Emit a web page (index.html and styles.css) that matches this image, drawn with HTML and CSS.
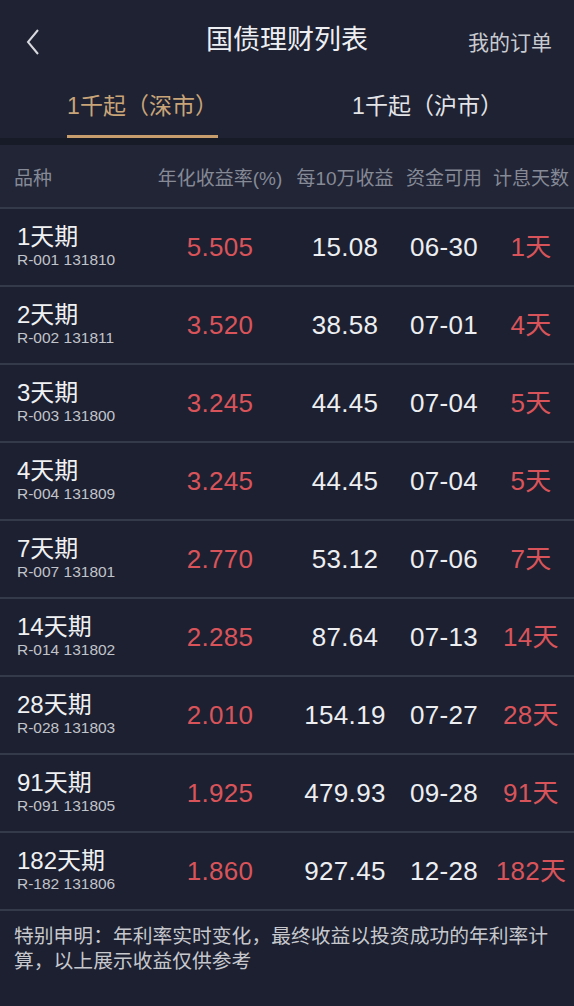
FILE: index.html
```html
<!DOCTYPE html>
<html lang="zh-CN">
<head>
    <meta charset="UTF-8">
    <title>国债理财列表</title>
    <link rel="stylesheet" href="styles.css">
</head>
<body>
    <div class="nav">
        <span class="back">
            <svg width="14" height="28" viewBox="0 0 14 28"><polyline points="12,2 2,14 12,26" fill="none" stroke="#d8d9de" stroke-width="2"/></svg>
        </span>
        <h1>国债理财列表</h1>
        <span class="orders">我的订单</span>
    </div>

    <div class="tabs">
        <div class="tab active"><span>1千起（深市）</span></div>
        <div class="tab"><span>1千起（沪市）</span></div>
    </div>
    <div class="strip"></div>

    <div class="row head">
        <div class="name">品种</div>
        <div>年化收益率(%)</div>
        <div>每10万收益</div>
        <div>资金可用</div>
        <div>计息天数</div>
    </div>

    <div id="list"></div>

    <p class="note">特别申明：年利率实时变化，最终收益以投资成功的年利率计算，以上展示收益仅供参考</p>

    <script>
        // rows of the product table
        const items = [
            ['1天期', 'R-001 131810', '5.505', '15.08', '06-30', '1天'],
            ['2天期', 'R-002 131811', '3.520', '38.58', '07-01', '4天'],
            ['3天期', 'R-003 131800', '3.245', '44.45', '07-04', '5天'],
            ['4天期', 'R-004 131809', '3.245', '44.45', '07-04', '5天'],
            ['7天期', 'R-007 131801', '2.770', '53.12', '07-06', '7天'],
            ['14天期', 'R-014 131802', '2.285', '87.64', '07-13', '14天'],
            ['28天期', 'R-028 131803', '2.010', '154.19', '07-27', '28天'],
            ['91天期', 'R-091 131805', '1.925', '479.93', '09-28', '91天'],
            ['182天期', 'R-182 131806', '1.860', '927.45', '12-28', '182天']
        ];
        document.getElementById('list').innerHTML = items.map(it => `
            <div class="row item">
                <div class="name"><div class="title">${it[0]}</div><div class="code">${it[1]}</div></div>
                <div class="num red">${it[2]}</div>
                <div class="num">${it[3]}</div>
                <div class="num">${it[4]}</div>
                <div class="num red">${it[5]}</div>
            </div>`).join('');
    </script>
</body>
</html>
```

FILE: styles.css
```css
body {
    font-family: "Liberation Sans", "Noto Sans CJK SC", sans-serif;
    background-color: #1c2030;
    color: #e6e7ea;
    margin: 0;
    padding: 0;
}

.nav {
    height: 80px;
    display: flex;
    align-items: center;
    justify-content: space-between;
    padding: 0 22px 0 26px;
    background-color: #1e2232;
    position: relative;
}

.back {
    display: flex;
    margin-top: 4px;
}

h1 {
    position: absolute;
    left: 0;
    right: 0;
    top: 24px;
    margin: 0;
    text-align: center;
    font-size: 27px;
    font-weight: normal;
    line-height: 32px;
    color: #eeeff2;
    pointer-events: none;
}

.orders {
    font-size: 21px;
    color: #c9cbd1;
    margin-top: 2px;
}

.tabs {
    display: flex;
    height: 58px;
    background-color: #1e2232;
    padding-right: 4px;
}

.tab {
    flex: 1;
    display: flex;
    justify-content: center;
}

.tab span {
    font-size: 23px;
    line-height: 48px;
    padding-top: 2px;
    color: #e3e4e8;
    box-sizing: border-box;
    height: 58px;
}

.tab.active span {
    color: #c9a479;
    border-bottom: 3px solid #c89d6e;
}

.strip {
    height: 7px;
    background-color: #171b27;
}

.row {
    display: grid;
    grid-template-columns: 150px 140px 110px 88px 86px;
    align-items: center;
    text-align: center;
    border-bottom: 2px solid #343a4a;
}

.row .name {
    text-align: left;
}

.head {
    height: 62px;
    background-color: #212536;
    font-size: 19px;
    color: #868a96;
    white-space: nowrap;
}

.head .name {
    padding-left: 14px;
}

.item {
    height: 76px;
}

.item .name {
    padding-left: 17px;
    padding-bottom: 2px;
}

.title {
    font-size: 24px;
    line-height: 28px;
    color: #f0f1f3;
}

.code {
    font-size: 15.5px;
    line-height: 18px;
    color: #c2c4cb;
}

.num {
    font-size: 26px;
    line-height: 30px;
    letter-spacing: 0.3px;
    color: #eceef1;
    white-space: nowrap;
}

.red {
    color: #d9545a;
}

.note {
    margin: 0;
    padding: 13px 14px;
    font-size: 19.8px;
    line-height: 25px;
    color: #c6c8ce;
}
```
